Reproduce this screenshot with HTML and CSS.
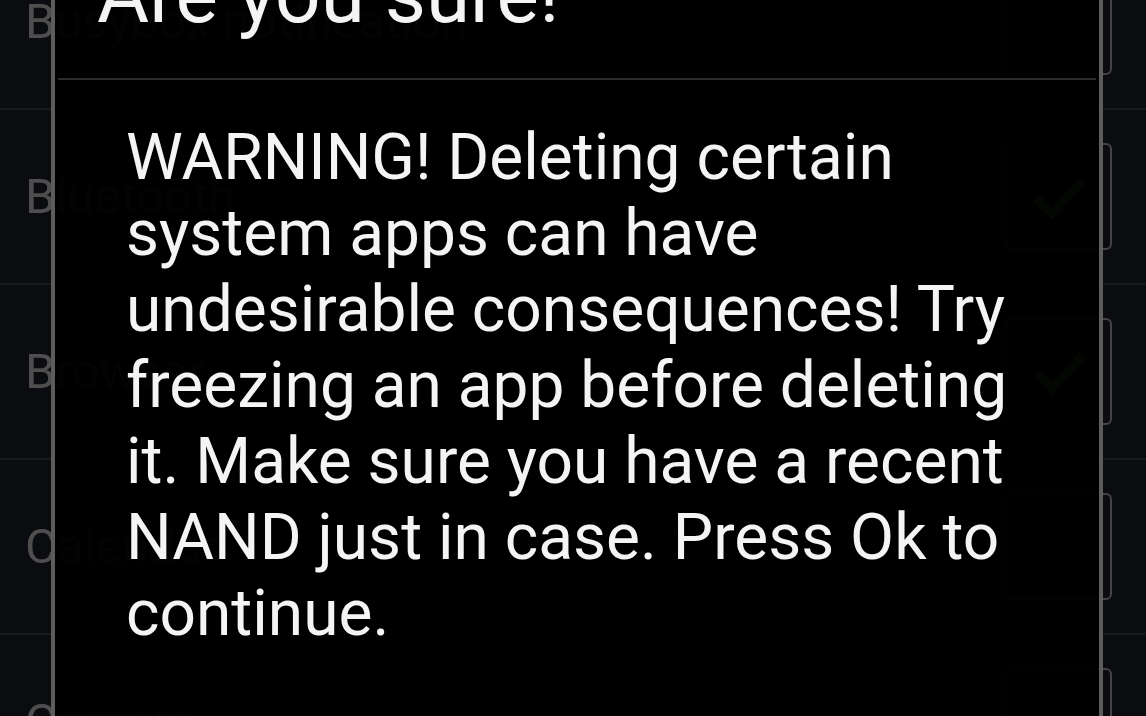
FILE: index.html
```html
<!DOCTYPE html>
<html lang="en">
<head>
  <meta charset="UTF-8">
  <title>Are you sure!</title>
  <link rel="stylesheet" href="styles.css">
</head>
<body>
  <div class="screen">
    <!-- settings list behind the dialog -->
    <div class="list">
      <div class="row">
        <span class="label">Busybox notification</span>
        <div class="box"></div>
      </div>
      <div class="row">
        <span class="label">Bluetooth</span>
        <div class="box">
          <svg class="tick" viewBox="0 0 100 100"><path d="M18 52 L40 74 L84 26" /></svg>
        </div>
      </div>
      <div class="row">
        <span class="label">Browser</span>
        <div class="box">
          <svg class="tick" viewBox="0 0 100 100"><path d="M18 52 L40 74 L84 26" /></svg>
        </div>
      </div>
      <div class="row">
        <span class="label">Calendar</span>
        <div class="box"></div>
      </div>
      <div class="row">
        <span class="label">Camera</span>
        <div class="box"></div>
      </div>
    </div>

    <div class="dialog">
      <div class="dialog-title">Are you sure!</div>
      <div class="divider"></div>
      <div class="dialog-body">
        WARNING! Deleting certain system apps can have undesirable consequences! Try freezing an app before deleting it. Make sure you have a recent NAND just in case. Press Ok to continue.
      </div>
    </div>
  </div>
</body>
</html>
```

FILE: styles.css
```css
body {
  margin: 0;
  background-color: #0b0c0f;
  font-family: Roboto, "Open Sans", sans-serif;
  overflow: hidden;
}

.screen {
  position: relative;
  width: 1146px;
  height: 716px;
  overflow: hidden;
}

.list {
  margin-top: -65px;
}

.row {
  height: 173px;
  border-bottom: 2px solid #17191c;
  display: flex;
  align-items: center;
  justify-content: space-between;
  padding: 0 34px 0 25px;
}

.label {
  color: #4e4e4e;
  font-size: 49px;
}

.box {
  width: 103px;
  height: 103px;
  border: 2px solid #444;
  border-radius: 6px;
  display: flex;
  align-items: center;
  justify-content: center;
}

.tick {
  width: 70px;
  height: 70px;
}

.tick path {
  fill: none;
  stroke: #6fb31f;
  stroke-width: 12;
}

/* dialog sits over the list */
.dialog {
  position: absolute;
  left: 51px;
  top: -60px;
  width: 1044px;
  height: 900px;
  border-left: 4px solid #5c5c5c;
  border-right: 4px solid #5c5c5c;
  background-color: rgba(0, 0, 0, 0.96);
}

.dialog-title {
  color: #f4f4f4;
  font-size: 80px;
  line-height: 72px;
  padding: 19px 0 0 42px;
}

.divider {
  height: 2px;
  background-color: #2c2c2c;
  margin: 47px 3px 0 3px;
}

.dialog-body {
  color: #f4f4f4;
  font-size: 64px;
  line-height: 76px;
  padding: 40px 60px 0 71px;
}
```
